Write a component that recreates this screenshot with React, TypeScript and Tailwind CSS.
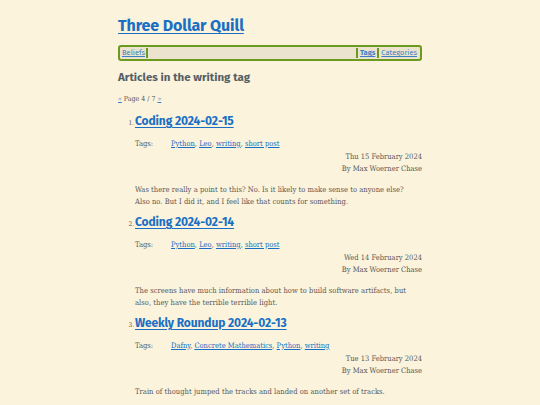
import React from "react";

const HEAD = { fontFamily: '"Fira Sans", "Open Sans", "Noto Sans", sans-serif' };
const BODY = { fontFamily: '"Roboto Slab", "DejaVu Serif Condensed", "DejaVu Serif", serif' };

const ARTICLES = [
  {
    n: 1,
    title: "Coding 2024-02-15",
    tags: ["Python", "Leo", "writing", "short post"],
    date: "Thu 15 February 2024",
    body: [
      "Was there really a point to this? No. Is it likely to make sense to anyone else?",
      "Also no. But I did it, and I feel like that counts for something.",
    ],
  },
  {
    n: 2,
    title: "Coding 2024-02-14",
    tags: ["Python", "Leo", "writing", "short post"],
    date: "Wed 14 February 2024",
    body: [
      "The screens have much information about how to build software artifacts, but",
      "also, they have the terrible terrible light.",
    ],
  },
  {
    n: 3,
    title: "Weekly Roundup 2024-02-13",
    tags: ["Dafny", "Concrete Mathematics", "Python", "writing"],
    date: "Tue 13 February 2024",
    body: ["Train of thought jumped the tracks and landed on another set of tracks."],
  },
];

function Article({ a }: { a: (typeof ARTICLES)[number] }) {
  return (
    <li className="flex h-[101px]">
      <span className="w-[17px] shrink-0 text-right pr-[1px] pt-[6px] text-[6.5px] text-[#555]" style={BODY}>
        {a.n}.
      </span>
      <div className="flex-1">
        <a
          className="block text-[12px] leading-[17px] font-bold text-[#1a6fc4] underline underline-offset-2 tracking-[-0.1px]"
          style={HEAD}
        >
          {a.title}
        </a>
        <div className="mt-[8px] text-[7.5px] leading-[12.5px] text-[#585858]" style={BODY}>
          <div className="flex">
            <span className="w-[36px]">Tags:</span>
            <span>
              {a.tags.map((t, i) => (
                <span key={t}>
                  <a className="text-[#1a6fc4] underline">{t}</a>
                  {i < a.tags.length - 1 ? ", " : ""}
                </span>
              ))}
            </span>
          </div>
          <div className="text-right">{a.date}</div>
          <div className="text-right">By Max Woerner Chase</div>
          <div className="mt-[8.5px] leading-[11.5px] tracking-[0.05px]">
            {a.body.map((l) => (
              <div key={l}>{l}</div>
            ))}
          </div>
        </div>
      </div>
    </li>
  );
}

export default function App() {
  return (
    <div className="min-h-[405px] w-[540px] bg-[#fbf3dc] overflow-hidden">
      <div className="w-[304px] ml-[118px] pt-[15px]">
        <a
          className="block text-[16px] leading-[22px] font-bold text-[#1a6fc4] underline underline-offset-2 tracking-[-0.1px]"
          style={HEAD}
        >
          Three Dollar Quill
        </a>
        <nav
          className="mt-[8px] h-[16px] flex items-center rounded-[3px] border-2 border-[#6b9a1e] bg-[#ebe3cd] text-[7.5px] px-[1px]"
          style={HEAD}
        >
          <a className="px-[1px] text-[#3d7fc4] underline">Beliefs</a>
          <span className="w-[2px] h-[10px] bg-[#6b9a1e]" />
          <span className="flex-1" />
          <span className="w-[2px] h-[10px] bg-[#6b9a1e]" />
          <a className="px-[2px] font-bold text-[#3d7fc4] underline">Tags</a>
          <span className="w-[2px] h-[10px] bg-[#6b9a1e]" />
          <a className="px-[2px] text-[#3d7fc4] underline">Categories</a>
        </nav>
        <h2 className="mt-[8px] text-[11.5px] leading-[16px] font-bold text-[#555f66]" style={HEAD}>
          Articles in the writing tag
        </h2>
        <div className="mt-[9px] text-[7px] leading-[10px] text-[#555]" style={BODY}>
          <a className="text-[#3d7fc4] underline">«</a> Page 4 / 7{" "}
          <a className="text-[#3d7fc4] underline">»</a>
        </div>
        <ol className="mt-[9px]">
          {ARTICLES.map((a) => (
            <Article key={a.n} a={a} />
          ))}
        </ol>
      </div>
    </div>
  );
}
